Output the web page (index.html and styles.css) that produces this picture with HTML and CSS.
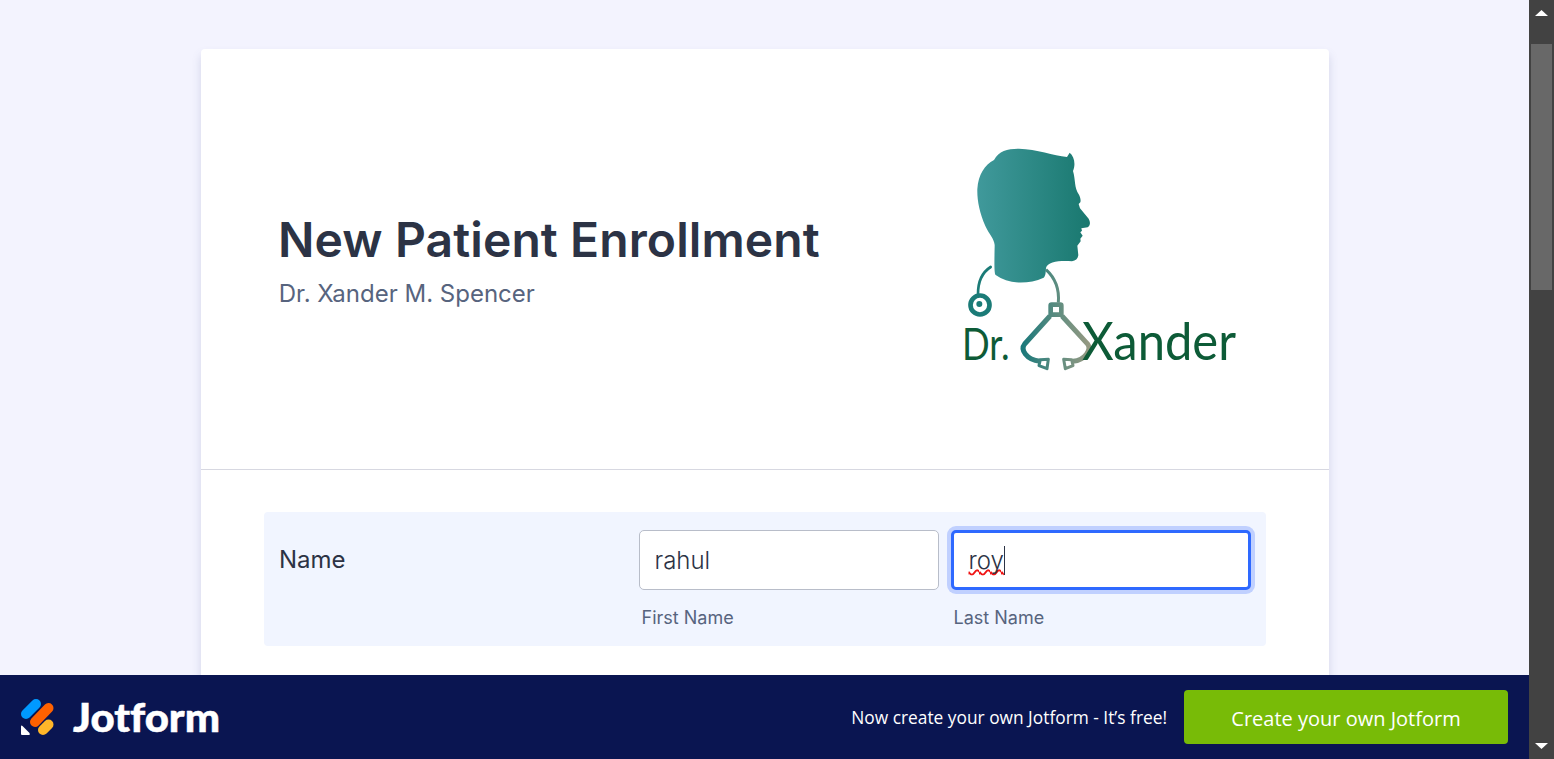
FILE: index.html
```html
<!DOCTYPE html>
<html lang="en">
<head>
<meta charset="utf-8">
<title>New Patient Enrollment</title>
<link rel="stylesheet" href="styles.css">
</head>
<body>
<div class="app">
  <div class="view">
    <main class="page">
      <form class="card">
        <header class="form-header">
          <div class="heading">
            <h1 class="title">New Patient Enrollment</h1>
            <p class="subtitle">Dr. Xander M. Spencer</p>
          </div>
          <svg class="brand" viewBox="0 0 900 720" role="img" aria-label="Dr. Xander">
            <defs>
              <linearGradient id="head" x1="0" x2="1"><stop offset="0" stop-color="#40999b"/><stop offset="1" stop-color="#19786f"/></linearGradient>
              <linearGradient id="tube" gradientUnits="userSpaceOnUse" x1="210" y1="0" x2="425" y2="0"><stop offset="0" stop-color="#16777a"/><stop offset=".5" stop-color="#5b8c80"/><stop offset="1" stop-color="#9a9a82"/></linearGradient>
            </defs>
            <path fill="url(#head)" d="M132 60C147 32 173 26 207 26C261 27 310 47 351 51L359 38C372 48 378 72 369 93C377 120 372 143 387 164C391 173 393 180 391 187L386 192L390 205L416 236C422 247 421 257 413 262L394 265L396 272L391 277L398 287L391 296L392 304L382 317L385 346C383 357 377 362 366 364C331 361 292 365 288 384C287 399 287 407 281 413C231 435 174 432 137 405C131 400 134 337 134 315C132 295 118 284 106 258C88 217 81 180 82 147C85 104 104 75 132 60Z"/>
            <path fill="none" stroke="#1b7b77" stroke-width="8" stroke-linecap="round" d="M122 381Q84 405 84 462"/>
            <circle cx="90" cy="495" r="28.500" fill="none" stroke="#1b7b77" stroke-width="14"/>
            <circle cx="88" cy="492" r="9" fill="#1b7b77"/>
            <g fill="none" stroke="url(#tube)">
              <path stroke-width="9" d="M288 389Q330 427 325 488"/>
              <rect x="302" y="494" width="32" height="30" rx="3" stroke-width="14"/>
              <path stroke-width="15" d="M300 528L224 612C211 628 227 658 270 664"/>
              <path stroke-width="15" d="M336 528L413 612C425 628 406 660 369 664"/>
              <path stroke-width="9" stroke-linejoin="round" d="M271 659L295 658L291 686L267 677ZM365 659L341 658L346 686L369 677Z"/>
            </g>
            <g class="brand-text">
              <text class="brand-prefix" x="36" y="661" textLength="143" lengthAdjust="spacingAndGlyphs">Dr.</text>
              <text x="396" y="660" textLength="462" lengthAdjust="spacingAndGlyphs">Xander</text>
            </g>
          </svg>
        </header>
        <section class="question">
          <div class="label">Name</div>
          <div class="fields">
            <div class="field">
              <div class="input">rahul</div>
              <div class="hint">First Name</div>
            </div>
            <div class="field">
              <div class="input focused"><span class="misspelled">roy</span><span class="caret"></span></div>
              <div class="hint">Last Name</div>
            </div>
          </div>
        </section>
      </form>
    </main>
    <footer class="footer">
      <svg class="jotform" viewBox="0 0 220 84" role="img" aria-label="Jotform">
        <g fill="none" stroke-width="10" stroke-linecap="round">
          <path stroke="#09f" d="M26 39L36 29"/>
          <path stroke="#ff6100" d="M35 47L48.500 33"/>
          <path stroke="#ffb629" d="M43 55L48.500 49.500"/>
        </g>
        <path fill="#fff" d="M21 51.500Q21 50 22.500 51L29.500 58Q30.500 60 29 60H22Q21 60 21 59Z"/>
        <text class="wordmark" x="73" y="57" textLength="147" lengthAdjust="spacingAndGlyphs">Jotform</text>
      </svg>
      <div class="promo">
        <span class="promo-text">Now create your own Jotform - It’s free!</span>
        <div class="button"><span class="button-text">Create your own Jotform</span></div>
      </div>
    </footer>
  </div>
  <aside class="scrollbar">
    <svg width="13" height="6" viewBox="0 0 13 6"><path fill="#fff" d="M6.500 0L13 6H0Z"/></svg>
    <div class="track"><div class="thumb"></div></div>
    <svg width="13" height="6" viewBox="0 0 13 6"><path fill="#fff" d="M0 0H13L6.500 6Z"/></svg>
  </aside>
</div>
</body>
</html>
```
FILE: styles.css
```css
* { box-sizing: border-box; }
body { margin: 0; overflow: hidden; font-family: Inter, "Liberation Sans", sans-serif; color: #2c3345; }
.app { display: flex; height: 759px; }
.view { flex: 1; display: flex; flex-direction: column; min-width: 0; }
.page { flex: 1; min-height: 0; overflow: hidden; padding: 49px 200px 0 201px; background: #f3f3fe; }
.card { height: 800px; background: #fff; border-radius: 4px; box-shadow: 0 6px 10px rgba(84, 95, 150, .2); }
.form-header { display: flex; justify-content: space-between; align-items: flex-start; height: 421px; padding: 91px 79px 0 77px; border-bottom: 1px solid #d7d8e1; }
.heading { padding-top: 71px; }
.title { margin: 0; font-size: 48px; line-height: 58px; font-weight: 600; letter-spacing: .1px; white-space: nowrap; }
.subtitle { margin: 10px 0 0 .8px; font-size: 24px; line-height: 29px; color: #57647e; }
.brand { width: 300px; height: 240px; }
.brand-text { font-family: Lato, sans-serif; font-weight: 400; font-size: 154px; fill: #0d5b37; }
.brand-prefix { font-size: 135px; }
.question { display: flex; height: 134px; margin: 42px 63px 0; padding: 18px 15px 0; border-radius: 4px; background: #f1f5ff; }
.label { width: 360px; padding-top: 15px; font-size: 24px; line-height: 29px; font-weight: 400; }
.fields { display: flex; gap: 12px; }
.field { width: 300px; }
.input { display: flex; align-items: center; height: 60px; padding: 1px 14.500px 0; border: 1px solid #b8bdc9; border-radius: 5px; background: #fff; font-size: 24px; line-height: 30px; font-weight: 300; }
.input.focused { border: 3px solid #2e69ff; box-shadow: 0 0 0 4px #c0d0ff; }
.misspelled { text-decoration: underline wavy #f01414 1.5px; text-underline-offset: 0; text-decoration-skip-ink: none; }
.caret { width: 1px; height: 29px; background: #2c3345; }
.hint { margin: 17px 0 0 2.500px; font-size: 18px; line-height: 22px; color: #57647e; }
.footer { display: flex; justify-content: space-between; height: 84px; padding-right: 21px; background: #0a1551; color: #fff; }
.jotform { width: 220px; height: 84px; }
.wordmark { font-family: Lato, sans-serif; font-weight: 900; font-size: 39.5px; font-variant-ligatures: none; fill: #fff; stroke: #fff; stroke-width: .5px; }
.promo { display: flex; align-items: center; gap: 17px; font-family: "Open Sans", "Noto Sans", sans-serif; white-space: nowrap; }
.promo-text { font-size: 17.33px; }
.button { display: flex; align-items: center; justify-content: center; width: 324px; height: 54px; border-radius: 4px; background: #78bb07; font-size: 20px; }
.button-text { padding-top: 2px; }
.scrollbar { display: flex; flex-direction: column; align-items: center; width: 25px; padding: 10px 0; background: #424242; }
.track { flex: 1; width: 21px; padding-top: 28px; }
.thumb { height: 246px; background: #686868; }
```
